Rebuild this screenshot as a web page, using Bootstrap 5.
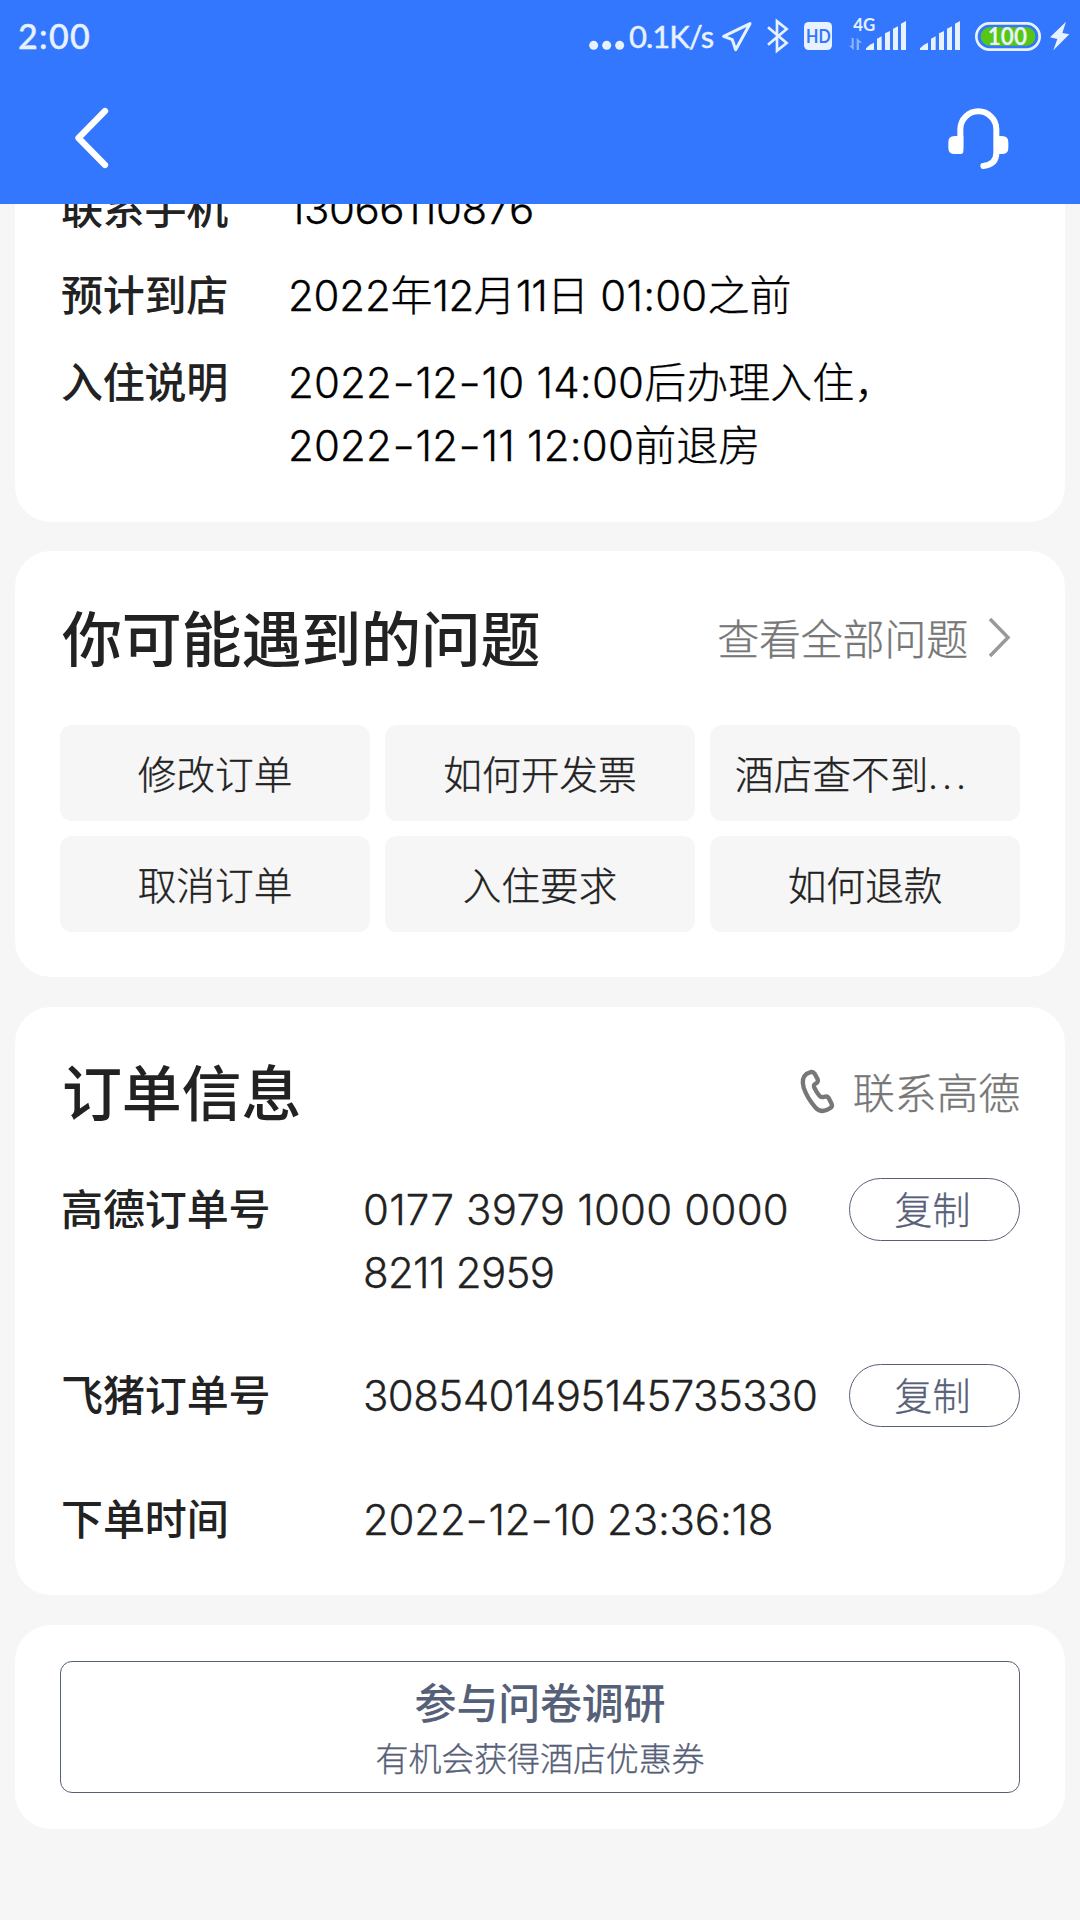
<!DOCTYPE html>
<html lang="zh-CN">
<head>
<meta charset="utf-8">
<meta name="viewport" content="width=device-width, initial-scale=1">
<title>订单详情</title>
<link href="https://cdn.jsdelivr.net/npm/bootstrap@5.3.0/dist/css/bootstrap.min.css" rel="stylesheet">
<style>
body{background:#f6f6f6;color:#222;font-family:Lato,"Noto Sans CJK SC",sans-serif;font-size:42px;line-height:63px;width:1080px;height:1920px;overflow:hidden}
svg{display:block;flex:none}
.topbar{background:#3377ff;height:204px;position:relative;z-index:2}
.statusbar{height:72px;color:#e8f2ff;padding-left:18px;line-height:72px}
.clock{font-size:34px;font-weight:500;letter-spacing:1.3px;-webkit-text-stroke:.4px}
.rate{font-size:31px;width:87px;padding-left:2px;letter-spacing:-1px;white-space:nowrap;-webkit-text-stroke:.4px}
.toolbar-row{height:132px;padding:0 70px 1px 74px}
.headset{margin-top:2px}
.panel{background:#fff;border-radius:36px;margin:0 15px;padding:0 45px}
.panel-stay{height:358px;margin-top:-40px;padding-top:13px;border-radius:0 0 36px 36px}
.panel-faq{height:426px;margin-top:29px;padding-top:46px}
.panel-order{height:588px;margin-top:30px;padding-top:44px}
.panel-survey{height:204px;margin-top:30px;padding-top:36px}
.stay-row{margin-bottom:24px;color:#000}
.stay-key{width:228px;padding-left:1px;color:#222;font-weight:500;letter-spacing:-.25px}
.num{font-family:Inter,Lato,sans-serif;font-weight:300;-webkit-text-stroke:.3px}
.dash{display:inline-block;transform:scaleX(1.2);padding:0 2.1px}
.ls-p2{letter-spacing:.2px}
.ls-n2{letter-spacing:-.2px}
.ls-n5{letter-spacing:-.5px}
.ls-n6{letter-spacing:-.58px}
.ls-n7{letter-spacing:-.7px}
.ls-n10{letter-spacing:-1px}
.thin{font-weight:300;-webkit-text-stroke:.3px}
.heading{font-size:60px;line-height:84px;font-weight:500;padding-left:2px;letter-spacing:-.2px}
.muted{color:#777;letter-spacing:-.2px}
.tiles{display:grid;grid-template-columns:repeat(3,310px);gap:15px;margin-top:44px}
.tile{height:96px;line-height:98px;border-radius:12px;background:#f6f6f6;font-size:38.7px;text-align:center;padding:0 25px}
.dots{letter-spacing:5px}
.phone{margin:-4px -1px 0 1px}
.order-row-a{margin-top:43px}
.order-row-b{margin-top:60px}
.order-row-c{margin-top:61px}
.order-key{width:303px;padding-left:1px;font-weight:500;letter-spacing:-.1px}
.order-val{flex:1;white-space:nowrap}
.copybtn{width:171px;height:63px;line-height:57px;border:1.5px solid #566078;border-radius:32px;color:#566078;background:#fff;font-size:38px;padding:0 4px 1px 0}
.survey{height:132px;border:1.5px solid #566078;border-radius:12px;color:#566078;background:#fff;width:960px;padding:2px 0 0;text-align:center}
.survey-title{line-height:64px;font-weight:500;letter-spacing:-.2px}
.survey-sub{font-size:33px;line-height:46px;letter-spacing:-.1px;padding-bottom:4px}
</style>
<script src="https://cdn.jsdelivr.net/npm/bootstrap@5.3.0/dist/js/bootstrap.bundle.min.js"></script>
</head>
<body>
<header class="topbar">
  <div class="statusbar d-flex justify-content-between">
    <span class="clock">2:00</span>
    <div class="d-flex align-items-center">
      <svg width="40" height="72" viewBox="80 0 120 216" fill="#e8f2ff"><circle cx="100" cy="136" r="13.5"/><circle cx="139" cy="136" r="13.5"/><circle cx="178" cy="136" r="13.5"/></svg>
      <span class="rate">0.1K/s</span>
      <svg width="366" height="72" viewBox="462 0 1098 216" fill="#e8f2ff">
        <path d="M570 71L491 109L517 119L527 149Z" fill="none" stroke="#e8f2ff" stroke-width="9" stroke-linejoin="round"/>
        <path d="M624 82L680 129L651 152V64L680 87L624 134" fill="none" stroke="#e8f2ff" stroke-width="8"/>
        <rect x="732" y="66" width="84" height="84" rx="14"/>
        <text x="775" y="128" text-anchor="middle" font-size="54" font-weight="700" fill="#3377ff" textLength="74" lengthAdjust="spacingAndGlyphs">HD</text>
        <text x="880" y="94" font-size="49" font-weight="700" textLength="66" lengthAdjust="spacingAndGlyphs">4G</text>
        <path d="M875 114h6v36l-14-13h8zM890 150v-36l16 14h-9v22z" opacity=".5"/>
        <g id="bars"><path d="M918 150v-5q12-14 24-17v22zM951 150v-34l14-7v41zM975 150v-50l15-7v57zM999 150V86l15-7v71zM1023 150V71l15-8v87z"/></g>
        <use href="#bars" x="162"/>
        <rect x="1249" y="70" width="190" height="79" rx="39.500" fill="none" stroke="#e8f2ff" stroke-width="8"/>
        <rect x="1262" y="82" width="164" height="55" rx="27" fill="#55c713"/>
        <text x="1342" y="134" text-anchor="middle" font-size="76" font-weight="700" textLength="118" lengthAdjust="spacingAndGlyphs">100</text>
        <path d="M1518 65L1470 112L1492 117L1480 151L1528 103L1507 99Z"/>
      </svg>
    </div>
  </div>
  <div class="toolbar-row d-flex justify-content-between align-items-center">
    <svg width="38" height="64" viewBox="74 106 38 64" fill="none" stroke="#fff" stroke-width="6.300" stroke-linecap="round" stroke-linejoin="round"><path d="M105 111L78.500 138L105 165"/></svg>
    <svg class="headset" width="63" height="64" viewBox="1160 318 189 192" fill="#fff"><path d="M1200 440V385A54 54 0 0 1 1308 385V455Q1308 490 1269 495" fill="none" stroke="#fff" stroke-width="18" stroke-linecap="round"/><path d="M1209 405V451Q1209 459 1201 459H1183Q1164 459 1164 440V424Q1164 405 1183 405ZM1308 405H1325Q1344 405 1344 424V440Q1344 459 1325 459H1308Z"/></svg>
  </div>
</header>
<main>
  <section class="panel panel-stay">
    <div class="stay-row d-flex"><div class="stay-key">联系手机</div><div><span class="num ls-n5">13066110876</span></div></div>
    <div class="stay-row d-flex"><div class="stay-key">预计到店</div><div class="thin"><span class="num ls-n2">2022</span>年<span class="num ls-n5">12</span>月<span class="num ls-n10">11</span>日 <span class="num ls-p2">01:00</span>之前</div></div>
    <div class="stay-row d-flex"><div class="stay-key">入住说明</div><div class="thin"><span class="num ls-p2">2022<span class="dash">-</span>12<span class="dash">-</span>10 14:00</span>后办理入住，<br><span class="num ls-p2">2022<span class="dash">-</span>12<span class="dash">-</span>11 12:00</span>前退房</div></div>
  </section>
  <section class="panel panel-faq">
    <div class="d-flex justify-content-between align-items-center"><div class="heading">你可能遇到的问题</div>
    <div class="muted thin d-flex align-items-center">查看全部问题<svg width="52" height="44" viewBox="0 0 52 44" fill="none" stroke="#999" stroke-width="3.5"><path d="M22 2L40 20.500L22 39"/></svg></div></div>
    <div class="tiles thin"><div class="tile">修改订单</div><div class="tile">如何开发票</div><div class="tile text-start">酒店查不到<span class="dots">...</span></div><div class="tile">取消订单</div><div class="tile">入住要求</div><div class="tile">如何退款</div></div>
  </section>
  <section class="panel panel-order">
    <div class="d-flex justify-content-between align-items-center"><div class="heading">订单信息</div><div class="muted thin d-flex align-items-center"><svg class="phone" width="60" height="60" viewBox="0 0 180 180" fill="none" stroke="#777" stroke-width="13" stroke-linejoin="round"><path d="M50 38L63 33Q70 32 74 38L83 55Q85 61 80 66L75 69Q70 73 73 80Q80 95 88 104Q93 110 99 108L105 107Q112 105 116 111L125 129Q128 136 121 141Q110 149 98 150Q85 150 76 139Q52 112 41 80Q33 51 50 38Z"/></svg><span class="ms-1">联系高德</span></div></div>
    <div class="order-row-a d-flex align-items-start"><div class="order-key">高德订单号</div><div class="order-val"><span class="num ls-p2">0177 3979 1000 0000</span><br><span class="num ls-n7">8211 2959</span></div><button class="copybtn thin">复制</button></div>
    <div class="order-row-b d-flex"><div class="order-key">飞猪订单号</div><div class="order-val"><span class="num ls-n6">3085401495145735330</span></div><button class="copybtn thin">复制</button></div>
    <div class="order-row-c d-flex"><div class="order-key">下单时间</div><div class="order-val"><span class="num ls-n2">2022<span class="dash">-</span>12<span class="dash">-</span>10 23:36:18</span></div></div>
  </section>
  <section class="panel panel-survey"><button class="survey d-block"><div class="survey-title">参与问卷调研</div><div class="survey-sub thin">有机会获得酒店优惠券</div></button></section>
</main>
</body>
</html>
